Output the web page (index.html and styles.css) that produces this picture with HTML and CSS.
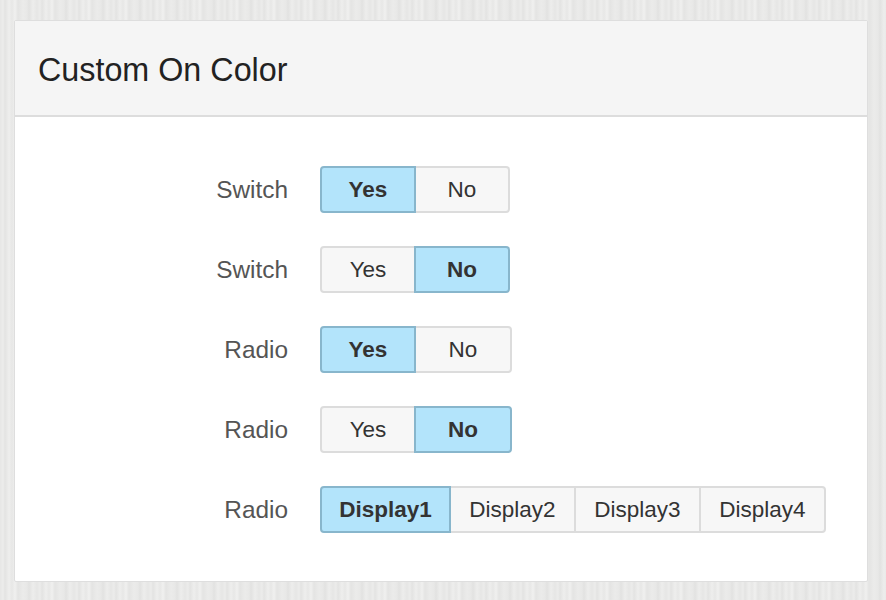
FILE: index.html
```html
<!DOCTYPE html>
<html>
<head>
<meta charset="utf-8">
<link rel="stylesheet" href="styles.css">
</head>
<body>
<div class="panel">
  <div class="panel-heading"><h3 class="panel-title">Custom On Color</h3></div>
  <div class="panel-body">
    <div class="row">
      <label class="label">Switch</label>
      <div class="btn-group">
        <span class="btn yn active">Yes</span><span class="btn yn">No</span>
      </div>
    </div>
    <div class="row">
      <label class="label">Switch</label>
      <div class="btn-group">
        <span class="btn yn">Yes</span><span class="btn yn active">No</span>
      </div>
    </div>
    <div class="row">
      <label class="label">Radio</label>
      <div class="btn-group">
        <span class="btn yn active">Yes</span><span class="btn yn wide">No</span>
      </div>
    </div>
    <div class="row">
      <label class="label">Radio</label>
      <div class="btn-group">
        <span class="btn yn">Yes</span><span class="btn yn wide active">No</span>
      </div>
    </div>
    <div class="row">
      <label class="label">Radio</label>
      <div class="btn-group">
        <span class="btn disp first active">Display1</span><span class="btn disp">Display2</span><span class="btn disp">Display3</span><span class="btn disp">Display4</span>
      </div>
    </div>
  </div>
</div>
</body>
</html>
```
FILE: styles.css
```css
html, body {
  margin: 0;
  padding: 0;
}
body {
  width: 886px;
  height: 600px;
  overflow: hidden;
  font-family: "Liberation Sans", Arial, Helvetica, sans-serif;
  color: #333;
  background-color: #e9e9e8;
  background-image: repeating-linear-gradient(90deg,
    #e6e6e5 0px, #ececeb 3px, #e3e3e2 5px, #eeeeed 9px, #e7e7e6 12px,
    #f0f0ef 15px, #e4e4e3 18px, #ebebea 23px, #e8e8e7 27px, #e2e2e1 29px,
    #ededec 33px, #e6e6e5 37px);
  padding: 20px 18px 0 14px;
  box-sizing: border-box;
}
.panel {
  background: #fff;
  border: 1px solid #dedede;
  box-sizing: border-box;
  width: 854px;
  height: 562px;
  border-radius: 2px;
}
.panel-heading {
  background: #f5f5f5;
  border-bottom: 2px solid #dddddd;
  height: 96px;
  box-sizing: border-box;
  display: flex;
  align-items: center;
  padding: 4px 23px 0 23px;
}
.panel-title {
  margin: 0;
  font-weight: normal;
  font-size: 32.3px;
  color: #222;
}
.panel-body {
  padding: 49px 0 0 0;
  display: flex;
  flex-direction: column;
  gap: 33px;
}
.row {
  display: flex;
  align-items: center;
  height: 47px;
}
.label {
  width: 273px;
  text-align: right;
  font-size: 24.4px;
  color: #555;
  padding-right: 32px;
  flex-shrink: 0;
}
.btn-group {
  display: flex;
}
.btn {
  display: inline-flex;
  align-items: center;
  justify-content: center;
  height: 47px;
  box-sizing: border-box;
  padding: 0 10px;
  font-size: 22.5px;
  color: #333;
  background: #f7f7f7;
  border: 2px solid #dcdcdc;
  margin-left: -2px;
}
.btn:first-child {
  margin-left: 0;
  border-radius: 4px 0 0 4px;
}
.btn:last-child {
  border-radius: 0 4px 4px 0;
}
.btn.yn {
  width: 96px;
}
.btn.yn.wide {
  width: 98px;
}
.btn.disp {
  width: 127px;
}
.btn.disp.first {
  width: 131px;
}
.btn.active {
  background: #b3e4fb;
  border-color: #88b6cc;
  font-weight: bold;
  position: relative;
  z-index: 1;
}
```
